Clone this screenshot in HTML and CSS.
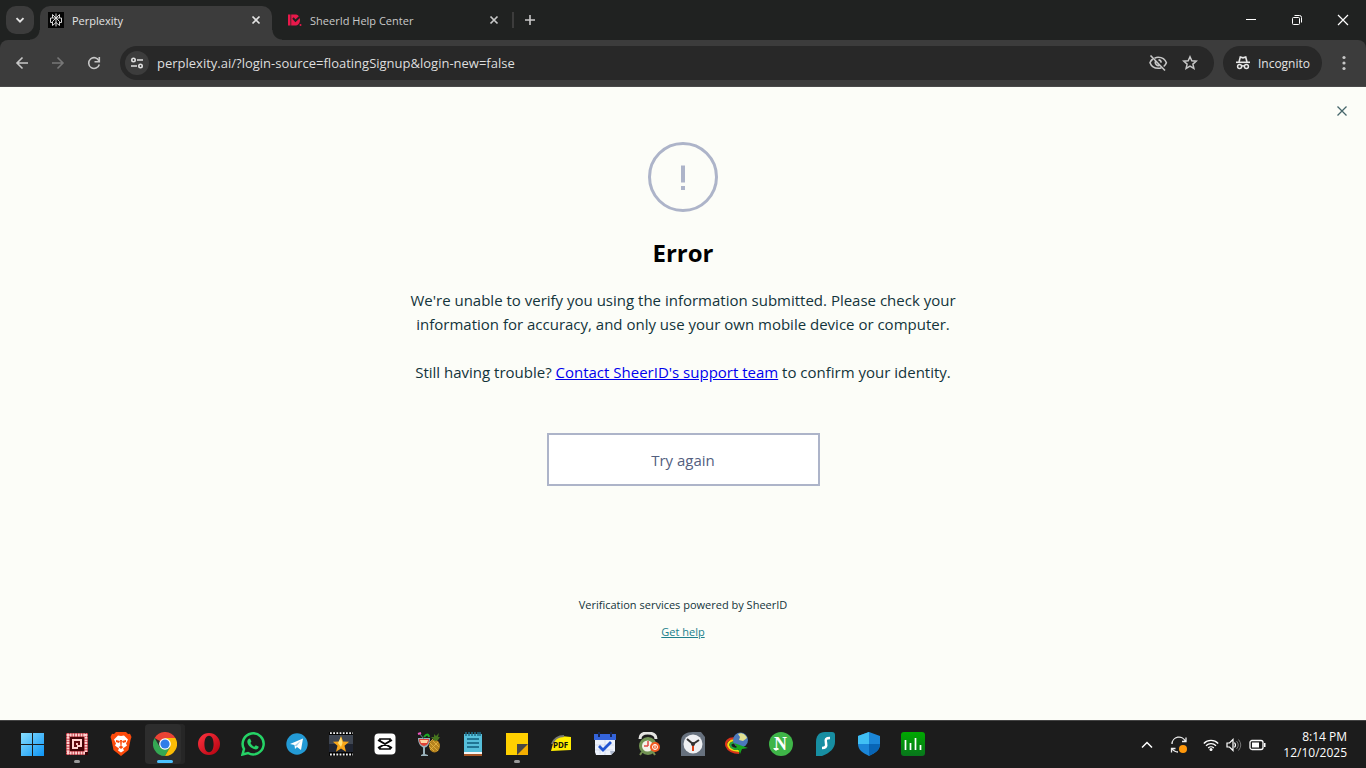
FILE: index.html
```html
<!DOCTYPE html>
<html lang="en">
<head>
<meta charset="utf-8">
<meta name="viewport" content="width=device-width, initial-scale=1">
<title>Perplexity</title>
<link rel="stylesheet" href="styles.css">
</head>
<body>
<div class="screen">
  <header class="browser">
    <div class="tabstrip">
      <button class="tab-search" aria-label="Search tabs"><svg width="10" height="10" viewBox="0 0 10 10"><path d="M1.5 3.2 5 6.7l3.5-3.5" fill="none" stroke="#e3e3e3" stroke-width="1.9"/></svg></button>
      <div class="tab tab-active">
        <svg width="16" height="16" viewBox="0 0 16 16"><rect width="16" height="16" fill="#050505"/><g fill="none" stroke="#d8d8d8" stroke-width="1"><path d="M8 1.500v13M4.500 2.500 8 6l3.500-3.500V6h-7zM4.500 6H2.500v4.500h2M11.500 6h2v4.500h-2M8 6l-3.500 3.500v4L8 10.500l3.500 3v-4z"/></g></svg>
        <span class="tab-title">Perplexity</span>
        <button class="tab-close" aria-label="Close tab"><svg width="10" height="10" viewBox="0 0 10 10"><path d="m1.5 1.5 7 7m0-7-7 7" stroke="#e3e3e3" stroke-width="1.7"/></svg></button>
      </div>
      <div class="tab">
        <svg width="16" height="16" viewBox="0 0 16 16"><path fill="#e9194b" d="M2 2.500h2.500v11H2zM5.200 2.500H9c3 0 5 2 5 5.500s-2 5.500-5 5.500H5.200z"/><path d="m7 6 2.500 2.800L13.500 5" fill="none" stroke="#202221" stroke-width="2"/><circle cx="14.500" cy="13" r="1" fill="#e9194b"/></svg>
        <span class="tab-title">SheerId Help Center</span>
        <button class="tab-close" aria-label="Close tab"><svg width="10" height="10" viewBox="0 0 10 10"><path d="m1.500 1.500 7 7m0-7-7 7" stroke="#c9c9c9" stroke-width="1.700"/></svg></button>
      </div>
      <span class="tab-divider"></span>
      <button class="new-tab" aria-label="New tab"><svg width="12" height="12" viewBox="0 0 12 12"><path d="M6 1v10M1 6h10" stroke="#c9c9c9" stroke-width="1.600"/></svg></button>
      <div class="window-controls">
        <button aria-label="Minimize"><svg width="12" height="12" viewBox="0 0 12 12"><path d="M1 5.500h10" stroke="#fff"/></svg></button>
        <button aria-label="Restore"><svg width="12" height="12" viewBox="0 0 12 12"><g fill="none" stroke="#fff"><rect x="1.500" y="3.500" width="7" height="7" rx="1"/><path d="M3.500 1.500h5a2 2 0 0 1 2 2v5"/></g></svg></button>
        <button aria-label="Close window"><svg width="12" height="12" viewBox="0 0 12 12"><path d="m1 1 10 10m0-10L1 11" stroke="#fff" stroke-width="1.200"/></svg></button>
      </div>
    </div>
    <div class="toolbar">
      <div class="nav">
        <button aria-label="Back"><svg width="14" height="14" viewBox="0 0 14 14"><path d="M13 7H2m5.500-5.500L2 7l5.500 5.500" fill="none" stroke="#c7c7c7" stroke-width="1.600"/></svg></button>
        <button aria-label="Forward" disabled><svg width="14" height="14" viewBox="0 0 14 14"><path d="M1 7h11M6.500 1.500 12 7l-5.500 5.500" fill="none" stroke="#777" stroke-width="1.600"/></svg></button>
        <button aria-label="Reload"><svg width="14" height="14" viewBox="0 0 14 14"><path d="M12 4.800A5.400 5.400 0 1 0 12.300 8.500" fill="none" stroke="#c7c7c7" stroke-width="1.600"/><path d="M12.300 1v4.800H7.500" fill="none" stroke="#c7c7c7" stroke-width="1.600"/></svg></button>
      </div>
      <div class="omnibox">
        <button class="site-info" aria-label="View site information"><svg width="14" height="14" viewBox="0 0 14 14"><g fill="none" stroke="#e0e0e0" stroke-width="1.600"><circle cx="3.500" cy="4" r="1.700"/><path d="M7 4h6M1 10h6"/><circle cx="10.500" cy="10" r="1.700"/></g></svg></button>
        <input class="address" type="text" aria-label="Address and search bar" value="perplexity.ai/?login-source=floatingSignup&amp;login-new=false">
        <button aria-label="Third-party cookies blocked"><svg width="20" height="20" viewBox="0 0 20 20"><g fill="none" stroke="#c7c7c7" stroke-width="1.600"><path d="M6.500 5.200C8 4.500 9 4.300 10.200 4.300c4 0 7 2.300 8.200 5.500-.5 1.400-1.500 2.700-2.700 3.700M13.500 14.700c-1 .4-2 .6-3.300.6-4 0-7-2.300-8.200-5.500.6-1.600 1.500-2.800 2.800-3.800"/><path d="M8 7.700a3 3 0 0 0 4.200 4.200M10.500 6.900a3 3 0 0 1 2.700 2.700M2.500 2.500l14.500 15"/></g></svg></button>
        <button aria-label="Bookmark this tab"><svg width="16" height="16" viewBox="0 0 16 16"><path d="m8 1.800 1.800 4 4.400.4-3.300 2.900 1 4.300L8 11.100l-3.900 2.300 1-4.300-3.300-2.900 4.400-.4z" fill="none" stroke="#c7c7c7" stroke-width="1.500"/></svg></button>
      </div>
      <button class="incognito"><svg width="16" height="16" viewBox="0 0 16 16"><path d="M1 7.300h14" stroke="#e6e6e6" stroke-width="1.600"/><path d="M4 7 5.300 2l2.700.8 2.700-.8L12 7" fill="none" stroke="#e6e6e6" stroke-width="1.600"/><g fill="none" stroke="#e6e6e6" stroke-width="1.500"><circle cx="4.600" cy="11.500" r="2"/><circle cx="11.400" cy="11.500" r="2"/><path d="M6.600 11.200q1.400-.8 2.800 0"/></g></svg><span>Incognito</span></button>
      <button class="more" aria-label="Menu"><svg width="4" height="16" viewBox="0 0 4 16"><g fill="#c7c7c7"><circle cx="2" cy="2.500" r="1.600"/><circle cx="2" cy="8" r="1.600"/><circle cx="2" cy="13.500" r="1.600"/></g></svg></button>
    </div>
  </header>

  <main class="page">
    <button class="dismiss" aria-label="Close"><svg width="10" height="10" viewBox="0 0 10 10"><path d="m.5.5 9 9m0-9-9 9" stroke="#46666b" stroke-width="1.300"/></svg></button>
    <svg class="alert-icon" width="70" height="70" viewBox="0 0 70 70"><circle cx="35" cy="35" r="33.500" fill="none" stroke="#adb4c9" stroke-width="3"/><path d="M33 23.500h4v17h-4zM33 44h4v4h-4z" fill="#adb4c9"/></svg>
    <h1 class="title">Error</h1>
    <p class="message">We're unable to verify you using the information submitted. Please check your<br>information for accuracy, and only use your own mobile device or computer.</p>
    <p class="message">Still having trouble? <a class="support" href="#support">Contact SheerID's support team</a> to confirm your identity.</p>
    <button class="retry">Try again</button>
    <footer class="footer">
      <p>Verification services powered by SheerID</p>
      <a class="help" href="#help">Get help</a>
    </footer>
  </main>

  <nav class="taskbar" aria-label="Taskbar">
    <div class="apps">
      <button aria-label="Start"><svg width="24" height="24" viewBox="0 0 24 24"><defs><linearGradient id="win" gradientUnits="userSpaceOnUse" x1="0" y1="0" x2="24" y2="24"><stop stop-color="#8be0ff"/><stop offset="1" stop-color="#0a93f5"/></linearGradient></defs><path fill="url(#win)" d="M0 1h11v11H0zM12 1h11v11H12zM0 13h11v11H0zM12 13h11v11H12z"/></svg></button>
      <button class="running" aria-label="Pixel recorder"><svg width="24" height="24" viewBox="0 0 24 24"><path fill="#a51b25" d="M1 1h22v22H1z"/><path d="M3 2v20M21 2v18M2 3h20M2 21h18" stroke="#ffd0cf" stroke-width="2.800" stroke-dasharray="2 .7"/><path fill="#450407" d="M5 5h14v14H5z"/><path fill="#ffd3d0" d="M7 7h10v8h-4v2H7z"/><path fill="#650b10" d="M9 9h6v4h-3v2H9z"/><path fill="#ffc0bd" d="M11 11h2v2h-2z"/><path fill="#390003" d="M20 20h3v3h-3z"/></svg></button>
      <button aria-label="Brave"><svg width="24" height="24" viewBox="0 0 24 24"><path fill="#fb4a0b" d="M7 0h10l2 2 2-.2L22.500 5l-1 3-2 10-7.500 6-7.500-6-2-10-1-3L3 1.800 5 2z"/><path fill="#fff" d="m12 4 3-.5 4 4-2 4 1 2-4 3 1 2-3 2-3-2 1-2-4-3 1-2-2-4 4-4z"/><path fill="#fb4a0b" d="m7 8 4 1-1 2-3-1zm10 0-4 1 1 2 3-1zM11 8h2l-.5 6 2 1L12 17l-2.500-2 2-1z"/></svg></button>
      <button class="running current" aria-label="Google Chrome"><svg width="24" height="24" viewBox="0 0 24 24"><path fill="#ea4335" d="M12 12 1.600 6A12 12 0 0 1 22.400 6z"/><path fill="#34a853" d="M1.600 6A12 12 0 0 0 12 24l5.200-9L12 12 6.800 15z"/><path fill="#fbbc05" d="M22.400 6A12 12 0 0 1 12 24l5.200-9L12 6z"/><circle cx="12" cy="12" r="5.800" fill="#fff"/><circle cx="12" cy="12" r="4.600" fill="#2f7de9"/></svg></button>
      <button aria-label="Opera"><svg width="24" height="24" viewBox="0 0 24 24"><defs><linearGradient id="opera" x2="1" y2="1"><stop stop-color="#ff3440"/><stop offset="1" stop-color="#b3000e"/></linearGradient></defs><path fill="url(#opera)" fill-rule="evenodd" d="M12 1a11 11 0 1 0 0 22 11 11 0 0 0 0-22m0 2.700c3.200 0 4.600 4 4.600 8.300s-1.400 8.300-4.600 8.300S7.400 16.300 7.400 12s1.400-8.300 4.600-8.300"/></svg></button>
      <button aria-label="WhatsApp"><svg width="24" height="24" viewBox="0 0 24 24"><path d="M1.500 22.500 3 17A10.500 10.500 0 1 1 7 21z" fill="none" stroke="#25d366" stroke-width="2.500"/><path fill="#25d366" d="m7.500 7 1.500-.5 1.400 3-1 1.500c1 2 2.300 3 4 3.800l1.400-1.500 3 1.500c-.4 2-2 3-4 2.500-4-1-7.500-4.500-7.500-7.800 0-1 .5-1.800 1.200-2.500"/></svg></button>
      <button aria-label="Telegram"><svg width="24" height="24" viewBox="0 0 24 24"><circle cx="12" cy="12" r="10.700" fill="#239ad5"/><path fill="#fff" d="M5 12 18 6.500 16 18l-4-3-2 2-.5-4z"/><path d="m9.500 13.500 6.500-5-4.500 6z" fill="#a9d2e9"/></svg></button>
      <button aria-label="Video maker"><svg width="24" height="24" viewBox="0 0 24 24"><path fill="#050505" d="M0 0h24v24H0z"/><path fill="#404753" d="M0 3h24v9H0z"/><path fill="#202532" d="M0 12h24v8H0z"/><path d="M1 1.200h23M1 22.500h23" stroke="#f3f3f3" stroke-width="1.800" stroke-dasharray="1.800 1.400"/><path fill="#f8a719" d="m12 4 2.100 5.500 6 .3-4.600 3.900 1.500 6-5-3.300-5 3.300 1.500-6-4.600-3.900 6-.3z"/><path fill="#ffe178" d="m12 5 1.500 6-1.500 4-3-4z"/></svg></button>
      <button aria-label="CapCut"><svg width="24" height="24" viewBox="0 0 24 24"><rect x="1.500" y="1.500" width="21" height="21" rx="4" fill="#fff"/><path d="m19 8-12 7v2h10v-2L5 8M19 16 7 9V7h10v2L5 16" fill="none" stroke="#060606" stroke-width="1.700"/></svg></button>
      <button aria-label="Fruit Cocktail"><svg width="24" height="24" viewBox="0 0 24 24"><ellipse cx="17.500" cy="14" rx="5.500" ry="6.500" fill="#b7831e"/><path d="m13 11 8 8m-5-10 6 6m-1-5-8 8m-1-4 5 5m-1-12-4 4" stroke="#e8b544" stroke-width=".8"/><path fill="#46751e" d="m18 9-4-4 3 0V2l2 2 3-3-1 4 2 0-2 3z"/><path fill="#9ab2bb" d="M1 6h12c0 5-2 9-5 9.500V22l3 1v1H4v-1l2-1v-6.500C3 14 1 11 1 6"/><path fill="#df4034" d="M2 7h10q0 6-5 7-5-1-5-7"/><path fill="#ffd2a0" d="M3 8h8l-1 3H4z"/><path d="m2 1 5 6" stroke="#5d8b91"/><path d="m1 2 3-1" stroke="#ef57c1" stroke-width="2"/><path d="M7 5q4-5 5 0" fill="none" stroke="#1cad24" stroke-width="2"/></svg></button>
      <button aria-label="Notepad"><svg width="24" height="24" viewBox="0 0 24 24"><path fill="#56bfda" d="M3 2h18v20H3z"/><path fill="#f5f5f4" d="M3 20h18v2H3z"/><path fill="#a85626" d="M3 22h18v2H3z"/><path d="M5 0v4m3-4v4m3-4v4m3-4v4m3-4v4m2-4v4" stroke="#1f6d89" stroke-width="1.500"/><path d="M6 7h12M6 11h12M6 15h12" stroke="#105d7c" stroke-width="1.700"/></svg></button>
      <button class="running" aria-label="Sticky Notes"><svg width="24" height="24" viewBox="0 0 24 24"><path fill="#ffd000" d="M1 1h22v22H1z"/><path fill="#f4ad00" d="M12 12h11v11H12z"/><path fill="#494743" d="M12 12h11L12 23z"/></svg></button>
      <button aria-label="PDF viewer"><svg width="24" height="24" viewBox="0 0 24 24"><path fill="#ffed00" d="M5 8 12 4l10 1v13L2 19z"/><path d="M3 12C5 7 9 4 15 4" fill="none" stroke="#777970" stroke-width="2"/><text x="4" y="16" class="pdf-label">PDF</text></svg></button>
      <button aria-label="Tasks"><svg width="24" height="24" viewBox="0 0 24 24"><path fill="#edf2fc" d="M2 2h20v17l-4 4H3l-1-3z"/><path fill="#3464db" d="M1 2h22v6H1z"/><path d="M6 0v5m12-5v5" stroke="#152654" stroke-width="2"/><path d="M7 12v10m5-14v15M2 13h19M2 18h18" stroke="#cbd3e8" stroke-width=".7"/><path d="m6 14 4 4 8-8" fill="none" stroke="#2054d1" stroke-width="2.800"/><path fill="#adb7cc" d="M17 19h5l-4 4z"/></svg></button>
      <button aria-label="Alarm clock"><svg width="24" height="24" viewBox="0 0 24 24"><path d="M3 7q0-6 7.500-6Q19 1 19 7" fill="none" stroke="#e4e4e1" stroke-width="3"/><path d="m5 20-2 3m13-3 2 3" stroke="#789050" stroke-width="2"/><circle cx="11" cy="14" r="9" fill="#719353"/><circle cx="10.500" cy="14" r="5.500" fill="#f4f2e9"/><path d="M11 14V9M11 14H7" stroke="#df4944" stroke-width="1.500"/><circle cx="18" cy="15" r="5" fill="#f15b22"/><circle cx="18" cy="15" r="2.500" fill="none" stroke="#fff"/><path d="M18 12.500v4" stroke="#fff"/></svg></button>
      <button aria-label="Clock"><svg width="24" height="24" viewBox="0 0 24 24"><path fill="#67717e" d="M0 24V9C0 3 5 0 12 0h8l4 5v19z"/><circle cx="12" cy="12" r="9.500" fill="#eff0f3"/><path d="m6 7 6 5 6-4" fill="none" stroke="#333" stroke-width="2"/><path d="M12 13v6" stroke="#df4419" stroke-width="2"/><circle cx="12" cy="12" r="2" fill="#333"/></svg></button>
      <button aria-label="Download manager"><svg width="24" height="24" viewBox="0 0 24 24"><path d="M10 6.500C3 6 0 10 1.500 14S8 21 14 21" fill="none" stroke="#dd321b" stroke-width="2.200"/><path d="M10 8.500C5 8 2.500 11 3.500 14S9 19 14 19" fill="none" stroke="#f8dc12" stroke-width="2.200"/><path d="M10 10.500c-3-.5-5 1-4.500 3s3 3.500 7.500 3.500" fill="none" stroke="#24a640" stroke-width="2"/><circle cx="15.500" cy="8" r="7.500" fill="#4b79ba"/><path fill="#dfdf91" d="M13 2c4-2 8 1 9 4l-4 3-4-1 1-3z"/><path fill="#18a91e" d="m9 11 14 5-6 1-2 5-2-5-5 1 4-3z"/></svg></button>
      <button aria-label="Neat Download"><svg width="24" height="24" viewBox="0 0 24 24"><circle cx="12" cy="12" r="12" fill="#3fb548"/><text x="5" y="18" class="n-label">N</text><path d="m4 16 3 3 3-3" fill="#fff"/></svg></button>
      <button aria-label="Surfshark"><svg width="24" height="24" viewBox="0 0 24 24"><path fill="#178ea2" d="M12 0h7q3 0 3 3v7c0 6-5 11-13 14H3V10C3 4 6 0 12 0"/><path d="M17 6c-4 0-5 1-4 5s-1 5-4 5" fill="none" stroke="#fff" stroke-width="2.600"/></svg></button>
      <button aria-label="Windows Security"><svg width="24" height="24" viewBox="0 0 24 24"><path fill="#1b86d8" d="M12 0 23 4v8c0 6-5 9-11 12C6 21 1 18 1 12V4z"/><path fill="#40bff4" d="M12 0v12H1V4z"/><path fill="#0865b6" d="M12 12h11c0 6-5 9-11 12z"/></svg></button>
      <button aria-label="Network monitor"><svg width="24" height="24" viewBox="0 0 24 24"><defs><linearGradient id="mon" x2="0" y2="1"><stop stop-color="#00a900"/><stop offset="1" stop-color="#08761c"/></linearGradient></defs><rect width="24" height="24" rx="3" fill="url(#mon)"/><path d="M4.500 8v10m5-7v7m5-12v12m5-5v5" stroke="#fff" stroke-width="1.700"/></svg></button>
    </div>
    <div class="tray">
      <button class="tray-wide" aria-label="Show hidden icons"><svg width="12" height="12" viewBox="0 0 12 12"><path d="m1 8.500 5-5 5 5" fill="none" stroke="#fff" stroke-width="1.500"/></svg></button>
      <button class="tray-wide" aria-label="Windows Update"><svg width="18" height="18" viewBox="0 0 18 18"><g fill="none" stroke="#eee" stroke-width="1.300"><path d="M2 8a7 7 0 0 1 13.500-2.500M16 1.500v4h-4M1.500 16.500v-4h4M2 12.500A7 7 0 0 0 8 16"/></g><circle cx="13" cy="13" r="4" fill="#ff980b"/></svg></button>
      <button class="status" aria-label="Network, volume and battery">
        <svg width="16" height="14" viewBox="0 0 16 14"><g fill="none" stroke="#fff" stroke-width="1.300"><path d="M.8 5.500a10 10 0 0 1 14.400 0M3 7.800a7 7 0 0 1 10 0M5.200 10a4 4 0 0 1 5.600 0"/></g><circle cx="8" cy="11.500" r="1.500" fill="#fff"/></svg>
        <svg width="16" height="14" viewBox="0 0 16 14"><path d="M1 5h2.500L7 1.500v11L3.500 9H1z" fill="none" stroke="#fff" stroke-width="1.200"/><path d="M8.500 4.500q2 2.500 0 5" fill="none" stroke="#fff" stroke-width="1.200"/><path d="M10.500 3q3.500 4 0 8M12.500 1.500q4.500 5.500 0 11" fill="none" stroke="#777"/></svg>
        <svg width="17" height="12" viewBox="0 0 17 12"><rect x="1" y="1.500" width="13" height="9" rx="2" fill="none" stroke="#fff" stroke-width="1.300"/><path fill="#fff" d="M3 3.500h7v5H3zM15 4h1.500v4H15z"/></svg>
      </button>
      <button class="clock"><time datetime="2025-12-10T20:14">8:14 PM<br>12/10/2025</time></button>
    </div>
  </nav>
</div>
</body>
</html>
```

FILE: styles.css
```css
* {
  box-sizing: border-box;
}

body {
  margin: 0;
  font-family: "Open Sans", "Noto Sans", sans-serif;
  background: #fcfdf8;
}

button {
  display: flex;
  align-items: center;
  justify-content: center;
  flex: none;
  margin: 0;
  padding: 0;
  border: 0;
  background: none;
  color: inherit;
  font: inherit;
}

svg {
  display: block;
  flex: none;
}

.screen {
  display: flex;
  flex-direction: column;
  min-height: 100vh;
}

/* Browser frame */
.browser {
  background: #202221;
  color: #e3e3e3;
}

.tabstrip {
  display: flex;
  align-items: center;
  height: 40px;
  padding-left: 6px;
  font-size: 11px;
}

.tab-search {
  width: 28px;
  height: 28px;
  margin-right: 6px;
  border-radius: 10px;
  background: #3c3c3c;
}

.tab {
  display: flex;
  align-items: center;
  align-self: flex-end;
  gap: 8px;
  width: 238px;
  height: 34px;
  padding: 0 8px 6px 14px;
  color: #c9c9c9;
}

.tab-active {
  position: relative;
  width: 232px;
  padding-left: 8px;
  border-radius: 10px 10px 0 0;
  background: #3c3c3c;
  color: #e3e3e3;
}

.tab-active::before,
.tab-active::after {
  content: "";
  position: absolute;
  bottom: 0;
  width: 10px;
  height: 10px;
}

.tab-active::before {
  right: 100%;
  background: radial-gradient(circle at 0 0, transparent 9px, #3c3c3c 10px);
}

.tab-active::after {
  left: 100%;
  background: radial-gradient(circle at 100% 0, transparent 9px, #3c3c3c 10px);
}

.tab-title {
  flex: 1;
  white-space: nowrap;
}

.tab-close {
  width: 16px;
  height: 16px;
}

.tab-divider {
  width: 2px;
  height: 16px;
  margin-left: 2px;
  background: #3c3c3c;
}

.new-tab {
  width: 32px;
  height: 28px;
}

.window-controls {
  display: flex;
  margin-left: auto;
}

.window-controls button {
  width: 46px;
  height: 40px;
}

.toolbar {
  display: flex;
  align-items: center;
  height: 47px;
  padding: 0 12px 0 4px;
  border-bottom: 1px solid #494949;
  border-radius: 8px 8px 0 0;
  background: #3c3c3c;
}

.nav {
  display: flex;
  margin-right: 8px;
}

.nav button {
  width: 36px;
  height: 34px;
}

.omnibox {
  display: flex;
  flex: 1;
  align-items: center;
  height: 34px;
  padding: 0 8px 0 5px;
  border-radius: 17px;
  background: #282828;
}

.omnibox button {
  width: 32px;
  height: 32px;
}

.omnibox .site-info {
  width: 24px;
  height: 24px;
  border-radius: 50%;
  background: #3c3c3c;
}

.address {
  flex: 1;
  min-width: 0;
  padding: 0 8px;
  border: 0;
  outline: 0;
  background: transparent;
  color: #dedede;
  font: 13px "Open Sans", sans-serif;
}

.incognito {
  gap: 7px;
  height: 34px;
  margin-left: 9px;
  padding: 0 12px;
  border-radius: 17px;
  background: #282828;
  font-size: 12px;
}

.more {
  width: 20px;
  height: 34px;
  margin-left: 12px;
}

/* Verification page */
.page {
  display: flex;
  flex: 1;
  flex-direction: column;
  align-items: center;
  padding: 16px;
  background: #fcfdf8;
  color: #13343b;
  text-align: center;
}

.dismiss {
  align-self: flex-end;
  width: 16px;
  height: 16px;
}

.alert-icon {
  margin-top: 23px;
}

.title {
  margin: 23px 0 17px;
  color: #000;
  font: bold 24px/36px "Open Sans", sans-serif;
}

.message {
  margin: 0 0 24px;
  font-size: 15px;
  line-height: 24px;
}

.support {
  color: #0000ee;
}

.retry {
  width: 273px;
  max-width: 100%;
  height: 53px;
  margin-top: 25px;
  border: 2px solid #adb4c9;
  background: #fff;
  color: #53607f;
  font-size: 15px;
}

.footer {
  display: flex;
  flex-direction: column;
  align-items: center;
  gap: 11px;
  margin-top: 111px;
  font-size: 11px;
  line-height: 16px;
}

.footer p {
  margin: 0;
}

.help {
  color: #20808d;
}

/* Taskbar */
.taskbar {
  display: flex;
  justify-content: space-between;
  height: 48px;
  padding: 0 19px 0 11px;
  border-top: 1px solid #444;
  background: #1c1c1c;
  color: #fff;
}

.apps,
.tray {
  display: flex;
  align-items: center;
}

.apps {
  padding-bottom: 1px;
}

.apps button {
  position: relative;
  width: 44px;
  height: 46px;
}

.running::after {
  content: "";
  position: absolute;
  bottom: 4px;
  left: 50%;
  width: 6px;
  height: 3px;
  border-radius: 2px;
  background: #999;
  transform: translateX(-50%);
}

.apps .current {
  width: 40px;
  height: 40px;
  margin: 0 2px;
  border-radius: 4px;
  background: #2d2d2d;
  box-shadow: inset -4px 0 0 #262626;
}

.current::after {
  bottom: 1px;
  width: 16px;
  background: #4cc2ff;
}

.pdf-label {
  fill: #111;
  font: bold 8px "Noto Sans", sans-serif;
}

.n-label {
  fill: #fff;
  font: bold 18px "Liberation Serif", serif;
}

.tray-wide {
  width: 32px;
  height: 40px;
}

.status {
  gap: 7px;
  height: 40px;
  margin-left: 8px;
}

.clock {
  margin-left: 17px;
  font-size: 12px;
  line-height: 16px;
  text-align: right;
}
```
